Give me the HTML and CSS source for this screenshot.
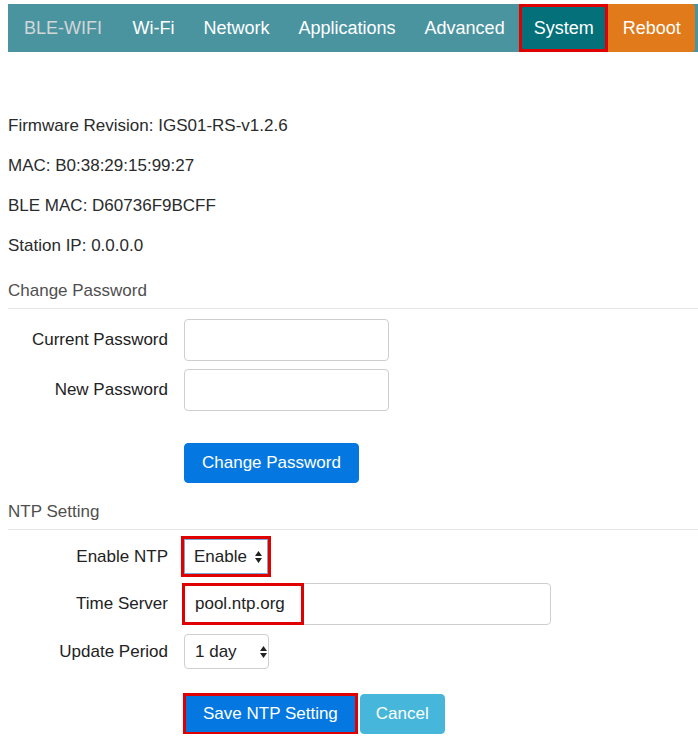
FILE: index.html
```html
<!DOCTYPE html>
<html lang="en">
<head>
<meta charset="utf-8">
<title>BLE-WIFI System</title>
<link rel="stylesheet" href="styles.css">
</head>
<body>
<nav class="navbar">
  <a class="brand">BLE-WIFI</a>
  <a class="nav-link">Wi-Fi</a>
  <a class="nav-link">Network</a>
  <a class="nav-link">Applications</a>
  <a class="nav-link">Advanced</a>
  <a class="nav-link active marked">System</a>
  <a class="nav-link reboot">Reboot</a>
</nav>
<main class="content">
  <p class="info">Firmware Revision: IGS01-RS-v1.2.6</p>
  <p class="info">MAC: B0:38:29:15:99:27</p>
  <p class="info">BLE MAC: D60736F9BCFF</p>
  <p class="info">Station IP: 0.0.0.0</p>

  <section class="group group-password">
    <div class="legend">Change Password</div>
    <div class="fields">
      <div class="row">
        <label class="label">Current Password</label>
        <input class="control control-pw" type="password">
      </div>
      <div class="row">
        <label class="label">New Password</label>
        <input class="control control-pw" type="password">
      </div>
    </div>
    <div class="actions actions-pw">
      <button class="btn btn-primary btn-change">Change Password</button>
    </div>
  </section>

  <section class="group group-ntp">
    <div class="legend">NTP Setting</div>
    <div class="fields fields-ntp">
      <div class="row">
        <label class="label">Enable NTP</label>
        <div class="select-wrap">
          <select class="control select select-enable marked-box">
            <option>Enable</option>
            <option>Disable</option>
          </select>
          <svg class="select-arrows" width="7" height="12" viewBox="0 0 7 12"><path d="M0 5 L3.5 0 L7 5 Z M0 7 L7 7 L3.5 12 Z" fill="#222"/></svg>
        </div>
      </div>
      <div class="row">
        <label class="label">Time Server</label>
        <div class="input-wrap">
          <input class="control control-server" type="text" value="pool.ntp.org">
          <span class="mark-server"></span>
        </div>
      </div>
      <div class="row">
        <label class="label">Update Period</label>
        <div class="select-wrap">
          <select class="control select select-period">
            <option>1 day</option>
            <option>1 hour</option>
          </select>
          <svg class="select-arrows arrows-period" width="7" height="12" viewBox="0 0 7 12"><path d="M0 5 L3.5 0 L7 5 Z M0 7 L7 7 L3.5 12 Z" fill="#222"/></svg>
        </div>
      </div>
    </div>
    <div class="actions actions-ntp">
      <button class="btn btn-primary marked-btn">Save NTP Setting</button>
      <button class="btn btn-info">Cancel</button>
    </div>
  </section>
</main>
</body>
</html>
```

FILE: styles.css
```css
* {
  box-sizing: border-box;
}

html, body {
  overflow: hidden;
}

body {
  margin: 4px 0 0 8px;
  font-family: "Liberation Sans", Arial, sans-serif;
  font-size: 17px;
  line-height: 24px;
  color: #292b2c;
  background: #fff;
}

/* Navbar */
.navbar {
  display: flex;
  align-items: stretch;
  height: 48px;
  background: #4a94a0;
}

.brand {
  display: flex;
  align-items: center;
  padding: 0 16px;
  font-size: 18px;
  color: #d2d6d7;
}

.nav-link {
  display: flex;
  align-items: center;
  padding: 0 14.5px;
  font-size: 18px;
  color: #fff;
}

.nav-link.active {
  background: #03707a;
}

.nav-link.marked {
  outline: 3px solid #e00000;
  outline-offset: -3px;
}

.nav-link.reboot {
  background: #e17a1a;
  border-radius: 0 4px 4px 0;
}

/* Content */
.content {
  padding-top: 62px;
}

.info {
  margin: 0 0 16px;
}

.legend {
  color: #4f4f4f;
  line-height: 24px;
  padding-bottom: 5px;
  border-bottom: 1px solid #e6e6e6;
}

.group-password {
  padding-top: 5px;
}

.group-ntp {
  margin-top: 17px;
}

.fields {
  display: flex;
  flex-direction: column;
  gap: 8px;
  margin-top: 10px;
}

.fields-ntp {
  gap: 9px;
  margin-top: 9px;
}

.row {
  display: flex;
  align-items: center;
}

.label {
  width: 160px;
  margin-right: 16px;
  text-align: right;
  color: #222;
}

.control {
  font-family: "Liberation Sans", Arial, sans-serif;
  font-size: 17px;
  color: #222;
  background: #fff;
  border: 1px solid #cfcfcf;
  border-radius: 4px;
}

.control-pw {
  width: 205px;
  height: 42px;
}

.input-wrap {
  position: relative;
}

.control-server {
  width: 367px;
  height: 42px;
  padding: 0 10px;
}

.mark-server {
  position: absolute;
  left: -2px;
  top: 0;
  width: 122px;
  height: 42px;
  border: 3px solid #e00000;
  pointer-events: none;
}

.select-wrap {
  position: relative;
}

.select {
  -webkit-appearance: none;
  appearance: none;
  height: 35px;
  padding: 0 0 0 9px;
}

.select-enable {
  width: 84px;
  border-radius: 0;
  border-color: #7aa6d6;
}

.marked-box {
  outline: 3px solid #e00000;
  outline-offset: 0;
}

.select-period {
  width: 85px;
  padding-left: 10px;
}

.select-arrows {
  position: absolute;
  top: 12px;
  right: 6px;
  pointer-events: none;
}

.arrows-period {
  right: 2px;
  top: 12px;
}

.actions {
  display: flex;
  gap: 3px;
  padding-left: 176px;
}

.actions-pw {
  margin-top: 32px;
}

.actions-ntp {
  margin-top: 25px;
}

.btn {
  height: 40px;
  padding: 0 16px;
  font-family: "Liberation Sans", Arial, sans-serif;
  font-size: 17px;
  line-height: 24px;
  color: #fff;
  border: 1px solid transparent;
  border-radius: 4px;
}

.btn-primary {
  background: #0478e0;
  border-color: #0478e0;
}

.btn-change {
  padding: 0 17px;
}

.btn-info {
  background: #46b6da;
  border-color: #46b6da;
  padding: 0 15px;
}

.marked-btn {
  padding: 0 18px;
  border-radius: 0;
  outline: 3px solid #e00000;
  outline-offset: -2px;
}
```
